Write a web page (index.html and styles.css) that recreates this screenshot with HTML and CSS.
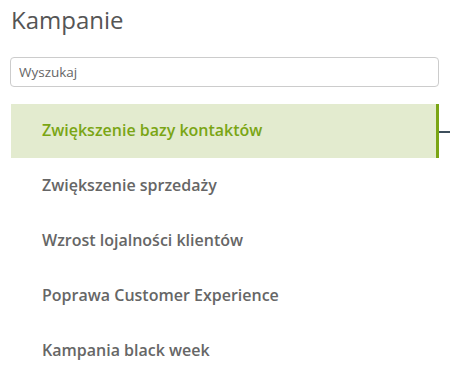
FILE: index.html
```html
<!DOCTYPE html>
<html lang="pl">
<head>
<meta charset="utf-8">
<link rel="stylesheet" href="styles.css">
</head>
<body>
<div class="panel">
  <h1 class="title">Kampanie</h1>
  <input class="search" type="text" placeholder="Wyszukaj">
  <ul class="list">
    <li class="item active">Zwiększenie bazy kontaktów<span class="connector"></span></li>
    <li class="item">Zwiększenie sprzedaży</li>
    <li class="item">Wzrost lojalności klientów</li>
    <li class="item">Poprawa Customer Experience</li>
    <li class="item">Kampania black week</li>
  </ul>
</div>
</body>
</html>
```
FILE: styles.css
```css
* { box-sizing: border-box; }
html, body { margin: 0; padding: 0; background: #fff; }
body { font-family: "Open Sans", sans-serif; color: #666; }
.panel { padding: 0 11px 0 11px; width: 450px; }
.title {
  margin: 0;
  padding-top: 5px;
  padding-left: 0;
  font-size: 24px;
  font-weight: 400;
  line-height: 30px;
  color: #555;
}
.search {
  display: block;
  margin: 22px 0 0 -1px;
  width: 429px;
  height: 30px;
  border: 1px solid #ccc;
  border-radius: 4px;
  padding: 0 8px;
  font-family: "Open Sans", sans-serif;
  font-size: 13.5px;
  color: #555;
  outline: none;
}
.search::placeholder { color: #666; }
.list { list-style: none; margin: 17px 0 0 0; padding: 0; }
.item {
  position: relative;
  height: 55px;
  line-height: 52px;
  padding-left: 31px;
  font-size: 16px;
  font-weight: 600;
  color: #666;
  width: 428px;
}
.item.active {
  background: #e3ebcf;
  color: #7aa514;
  border-right: 3px solid #7aa514;
  height: 54px;
  margin-bottom: 1px;
}
.connector {
  position: absolute;
  right: -14px;
  top: 27px;
  width: 11px;
  height: 2px;
  background: #3d4f5c;
}
```
